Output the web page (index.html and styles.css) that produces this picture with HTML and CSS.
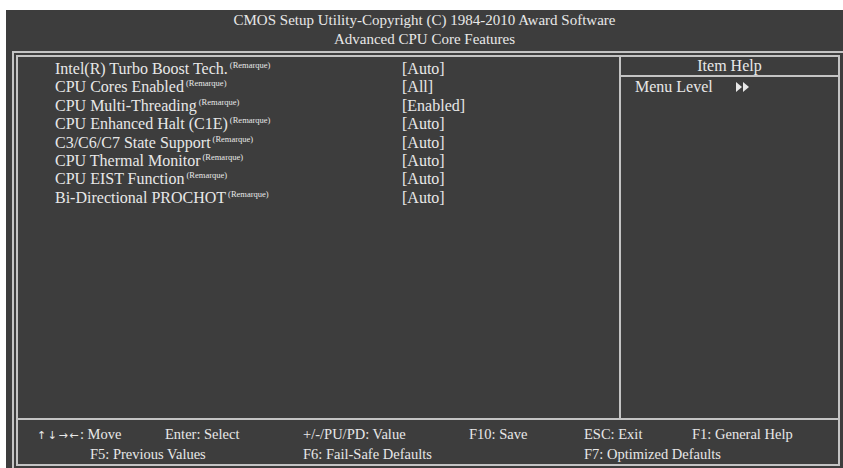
FILE: index.html
```html
<!DOCTYPE html>
<html lang="en">
<head>
  <meta charset="UTF-8" />
  <title>CMOS Setup Utility</title>
  <link rel="stylesheet" href="styles.css">
</head>
<body>
  <div class="screen">
    <!-- title -->
    <div class="title">
      <div>CMOS Setup Utility-Copyright (C) 1984-2010 Award Software</div>
      <div>Advanced CPU Core Features</div>
    </div>

    <div class="frame-outer">
      <div class="frame-inner">
        <div class="main">
          <div class="items">
            <div class="row"><span class="label">Intel(R) Turbo Boost Tech.<sup>(Remarque)</sup></span><span class="value">[Auto]</span></div>
            <div class="row"><span class="label">CPU Cores Enabled<sup>(Remarque)</sup></span><span class="value">[All]</span></div>
            <div class="row"><span class="label">CPU Multi-Threading<sup>(Remarque)</sup></span><span class="value">[Enabled]</span></div>
            <div class="row"><span class="label">CPU Enhanced Halt (C1E)<sup>(Remarque)</sup></span><span class="value">[Auto]</span></div>
            <div class="row"><span class="label">C3/C6/C7 State Support<sup>(Remarque)</sup></span><span class="value">[Auto]</span></div>
            <div class="row"><span class="label">CPU Thermal Monitor<sup>(Remarque)</sup></span><span class="value">[Auto]</span></div>
            <div class="row"><span class="label">CPU EIST Function<sup>(Remarque)</sup></span><span class="value">[Auto]</span></div>
            <div class="row"><span class="label">Bi-Directional PROCHOT<sup>(Remarque)</sup></span><span class="value">[Auto]</span></div>
          </div>
          <div class="help">
            <div class="help-title">Item Help</div>
            <div class="help-line">Menu Level <span class="arrows">
              <svg width="14" height="10" viewBox="0 0 14 10"><polygon points="0,0 6,5 0,10" fill="#e8e8e8"/><polygon points="7,0 13,5 7,10" fill="#e8e8e8"/></svg>
            </span></div>
          </div>
        </div>

        <!-- key hints -->
        <div class="keys">
          <div class="keys-row first">
            <span class="k1"><span class="arr">&uarr;&darr;&rarr;&larr;</span>: Move</span>
            <span class="k2">Enter: Select</span>
            <span class="k3">+/-/PU/PD: Value</span>
            <span class="k4">F10: Save</span>
            <span class="k5">ESC: Exit</span>
            <span>F1: General Help</span>
          </div>
          <div class="keys-row second">
            <span class="k6">F5: Previous Values</span>
            <span class="k7">F6: Fail-Safe Defaults</span>
            <span>F7: Optimized Defaults</span>
          </div>
        </div>
      </div>
    </div>
  </div>
</body>
</html>
```

FILE: styles.css
```css
html, body {
  margin: 0;
  padding: 0;
  background: #ffffff;
  overflow: hidden;
  height: 468px;
}

.screen {
  margin: 10px 0 0 6px;
  height: 458px;
  background-color: #3d3d3d;
  color: #e8e8e8;
  font-family: "Liberation Serif", "Times New Roman", serif;
  overflow: hidden;
}

.title {
  height: 41px;
  text-align: center;
  font-size: 15px;
  line-height: 19px;
  padding-top: 1px;
  box-sizing: border-box;
}

.frame-outer {
  margin-left: 6px;
  width: 840px;
  height: 430px;
  border: 2px solid #c4c4c4;
  padding: 2px;
}

.frame-inner {
  width: 820px;
  height: 407px;
  border: 2px solid #c4c4c4;
  display: flex;
  flex-direction: column;
}

.main {
  height: 361px;
  display: flex;
  border-bottom: 2px solid #c4c4c4;
}

.items {
  width: 603px;
  border-right: 2px solid #c4c4c4;
  padding: 3px 0 0 37px;
  box-sizing: border-box;
  font-size: 16px;
  line-height: 18.4px;
}

.row {
  display: flex;
}

.label {
  width: 347px;
}

sup {
  font-size: 8.5px;
  vertical-align: 6px;
  line-height: 0;
  margin-left: 2px;
}

.help {
  flex: 1;
  font-size: 16px;
}

.help-title {
  text-align: center;
  line-height: 18px;
  border-bottom: 2px solid #c4c4c4;
}

.help-line {
  padding-left: 14px;
  line-height: 20px;
}

.arrows {
  margin-left: 19px;
}

.keys {
  flex: 1;
  font-size: 14.5px;
  line-height: 19px;
  padding-top: 5px;
}

.keys-row {
  display: flex;
}

.keys-row.first {
  padding-left: 19px;
}

.keys-row.second {
  padding-left: 72px;
}

.arr {
  font-family: "DejaVu Sans", sans-serif;
  font-size: 11px;
  letter-spacing: 1.5px;
}

.k1 { width: 128px; }
.k2 { width: 138px; }
.k3 { width: 166px; }
.k4 { width: 115px; }
.k5 { width: 108px; }
.k6 { width: 213px; }
.k7 { width: 281px; }
```
